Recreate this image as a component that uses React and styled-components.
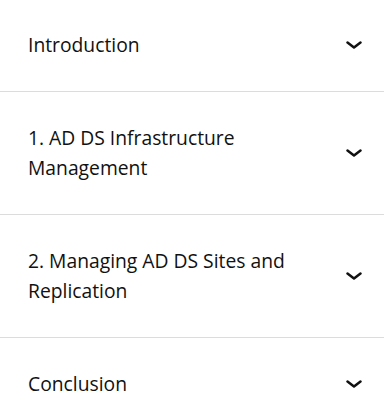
import React from "react";
import styled, { createGlobalStyle } from "styled-components";

const Global = createGlobalStyle`
  html, body { margin: 0; padding: 0; background: #ffffff; }
  body { font-family: "Open Sans", "Noto Sans", Arial, sans-serif; }
`;

const List = styled.div`
  width: 384px;
  display: flex;
  flex-direction: column;
`;

const Item = styled.div`
  display: flex;
  align-items: center;
  justify-content: space-between;
  gap: 16px;
  padding: 31px 22px 31px 28px;
  border-bottom: 1px solid #dcdcdc;
  &:first-child { padding-top: 30px; }
`;

const Title = styled.span`
  font-size: 19.3px;
  line-height: 30px;
  color: #111111;
  font-weight: 500;
  max-width: 290px;
`;

const Chevron = styled.svg`
  flex: none;
  width: 16px;
  height: 10px;
`;

const items = [
  "Introduction",
  "1. AD DS Infrastructure Management",
  "2. Managing AD DS Sites and Replication",
  "Conclusion",
];

export default function App() {
  return (
    <>
      <Global />
      <List>
        {items.map((t) => (
          <Item key={t}>
            <Title>{t}</Title>
            <Chevron viewBox="0 0 16 10">
              <polyline points="1.5,2.5 8,7.5 14.5,2.5" fill="none" stroke="#111" strokeWidth="2.5" strokeLinecap="round" strokeLinejoin="round" />
            </Chevron>
          </Item>
        ))}
      </List>
    </>
  );
}
